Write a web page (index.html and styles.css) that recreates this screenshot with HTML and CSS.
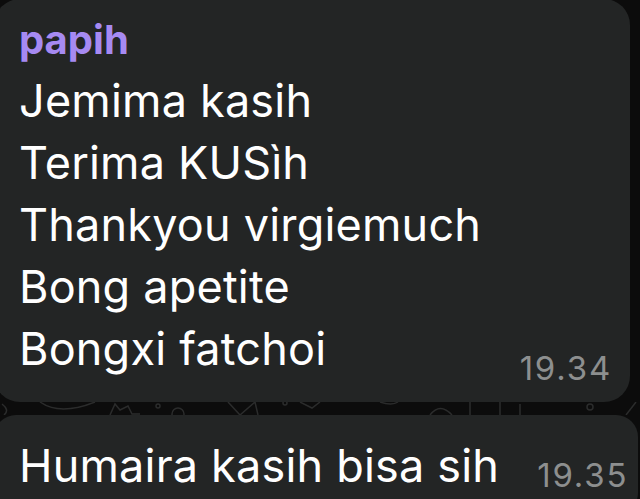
FILE: index.html
```html
<!DOCTYPE html>
<html>
<head>
<meta charset="utf-8">
<link rel="stylesheet" href="styles.css">
</head>
<body>
<div class="chat">
  <div class="bubble first">
    <div class="sender">papih</div>
    <div class="body">
      <div class="lines">
        <div class="line">Jemima kasih</div>
        <div class="line">Terima KUSìh</div>
        <div class="line">Thankyou virgiemuch</div>
        <div class="line">Bong apetite</div>
        <div class="line">Bongxi fatchoi</div>
      </div>
      <div class="time t1">19.34</div>
    </div>
  </div>
  <div class="gap">
    <svg class="doodle" width="640" height="13" viewBox="0 0 640 13" fill="none" stroke="#2b2c2c" stroke-width="1.5">
      <path d="M2 2 Q10 8 4 13"/>
      <path d="M40 0 Q60 14 95 0"/>
      <path d="M110 13 L115 2 L120 8 L128 4 L132 12 L140 12"/>
      <circle cx="158" cy="4" r="2"/>
      <circle cx="178" cy="12" r="6"/>
      <path d="M228 0 L240 13 L255 0 L258 13"/>
      <circle cx="285" cy="1" r="2"/>
      <path d="M300 0 L312 6 L320 0"/>
      <path d="M380 0 Q392 4 398 0"/>
      <path d="M430 13 Q440 0 452 13"/>
      <path d="M470 0 L470 13 M500 0 L500 13 M520 2 L520 13"/>
      <circle cx="590" cy="5" r="3"/>
      <path d="M626 13 L636 0"/>
    </svg>
  </div>
  <div class="bubble second">
    <div class="body">
      <div class="lines">
        <div class="line">Humaira kasih bisa sih</div>
      </div>
      <div class="time t2">19.35</div>
    </div>
  </div>
</div>
</body>
</html>
```

FILE: styles.css
```css
html, body {
  margin: 0;
  padding: 0;
  background: #0c0c0c;
  width: 640px;
  height: 499px;
  overflow: hidden;
}

.chat {
  display: flex;
  flex-direction: column;
  font-family: Inter, "Noto Sans", sans-serif;
  color: #ffffff;
}

.bubble {
  background: #232525;
  box-sizing: border-box;
}

.first {
  margin-top: -1px;
  margin-left: -6px;
  width: 636px;
  height: 403px;
  border-radius: 26px;
  padding: 21px 0 0 25px;
}

.sender {
  color: #a68af2;
  font-weight: 700;
  font-size: 40px;
  line-height: 40px;
}

.body {
  display: flex;
  align-items: flex-end;
}

.lines {
  display: flex;
  flex-direction: column;
}

.first .lines {
  margin-top: 10px;
}

.line {
  font-size: 45px;
  line-height: 62px;
  letter-spacing: 0.2px;
}

.time {
  color: #8d8f8f;
  font-size: 33px;
  line-height: 40px;
  letter-spacing: 1.8px;
}

.t1 {
  margin-left: auto;
  margin-right: 18px;
  margin-bottom: -8px;
}

.gap {
  height: 13px;
  overflow: hidden;
}

.doodle {
  display: block;
}

.second {
  margin-left: -6px;
  width: 644px;
  height: 100px;
  border-radius: 22px;
  padding: 20px 0 0 25px;
}

.t2 {
  margin-left: 38px;
  margin-bottom: 2px;
}
```
